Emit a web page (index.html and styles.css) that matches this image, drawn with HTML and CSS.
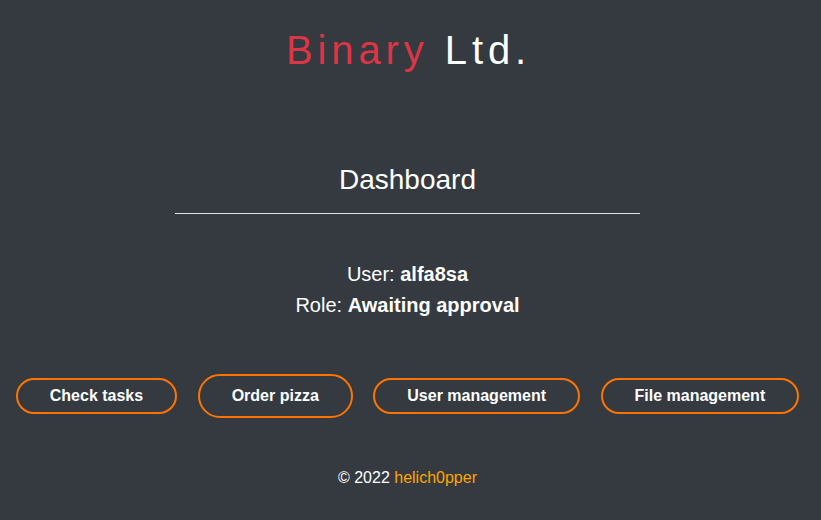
FILE: index.html
```html
<!DOCTYPE html>
<html lang="en">
<head>
<meta charset="utf-8">
<title>Binary Ltd. - Dashboard</title>
<link rel="stylesheet" href="styles.css">
</head>
<body>
<div class="page">
  <header class="brand"><span class="brand-red">Binary</span> Ltd.</header>
  <main class="main">
    <h1 class="title">Dashboard</h1>
    <hr class="rule">
    <div class="info">
      <p class="info-line">User: <b>alfa8sa</b></p>
      <p class="info-line">Role: <b>Awaiting approval</b></p>
    </div>
    <nav class="actions">
      <a class="btn" href="#">Check tasks</a>
      <a class="btn btn-tall" href="#">Order pizza</a>
      <a class="btn" href="#">User management</a>
      <a class="btn" href="#">File management</a>
    </nav>
  </main>
  <footer class="footer">© 2022 <a class="footer-link" href="#">helich0pper</a></footer>
</div>
</body>
</html>
```
FILE: styles.css
```css
html, body {
  margin: 0;
  padding: 0;
  background: #343a40;
  height: 100%;
}
body {
  font-family: "Liberation Sans", Arial, sans-serif;
  color: #ffffff;
}
.page {
  width: 815px;
  padding-top: 26px;
  display: flex;
  flex-direction: column;
  align-items: center;
}
.brand {
  font-size: 40px;
  line-height: 48px;
  letter-spacing: 4.9px;
  margin-left: 2px;
  color: #ffffff;
}
.brand-red {
  color: #dc3545;
}
.main {
  width: 100%;
  display: flex;
  flex-direction: column;
  align-items: center;
  margin-top: 89px;
}
.title {
  margin: 0;
  font-size: 28px;
  font-weight: normal;
  line-height: 34px;
}
.rule {
  width: 465px;
  margin: 16px 0 0 0;
  border: 0;
  border-top: 1px solid #dee2e6;
  height: 0;
}
.info {
  margin-top: 45px;
  text-align: center;
}
.info-line {
  margin: 0;
  font-size: 20px;
  line-height: 31px;
}
.actions {
  margin-top: 53px;
  display: flex;
  align-items: center;
  justify-content: center;
  gap: 20.5px;
}
.btn {
  display: block;
  padding: 7px 32px;
  border: 2px solid #ff7400;
  border-radius: 22px;
  color: #ffffff;
  font-weight: bold;
  font-size: 16px;
  line-height: 18px;
  text-decoration: none;
  white-space: nowrap;
}
.btn-tall {
  padding: 11px 32px 11px;
}
.footer {
  margin-top: 51px;
  font-size: 16px;
  line-height: 18px;
}
.footer-link {
  color: #ffa500;
  text-decoration: none;
}
```
